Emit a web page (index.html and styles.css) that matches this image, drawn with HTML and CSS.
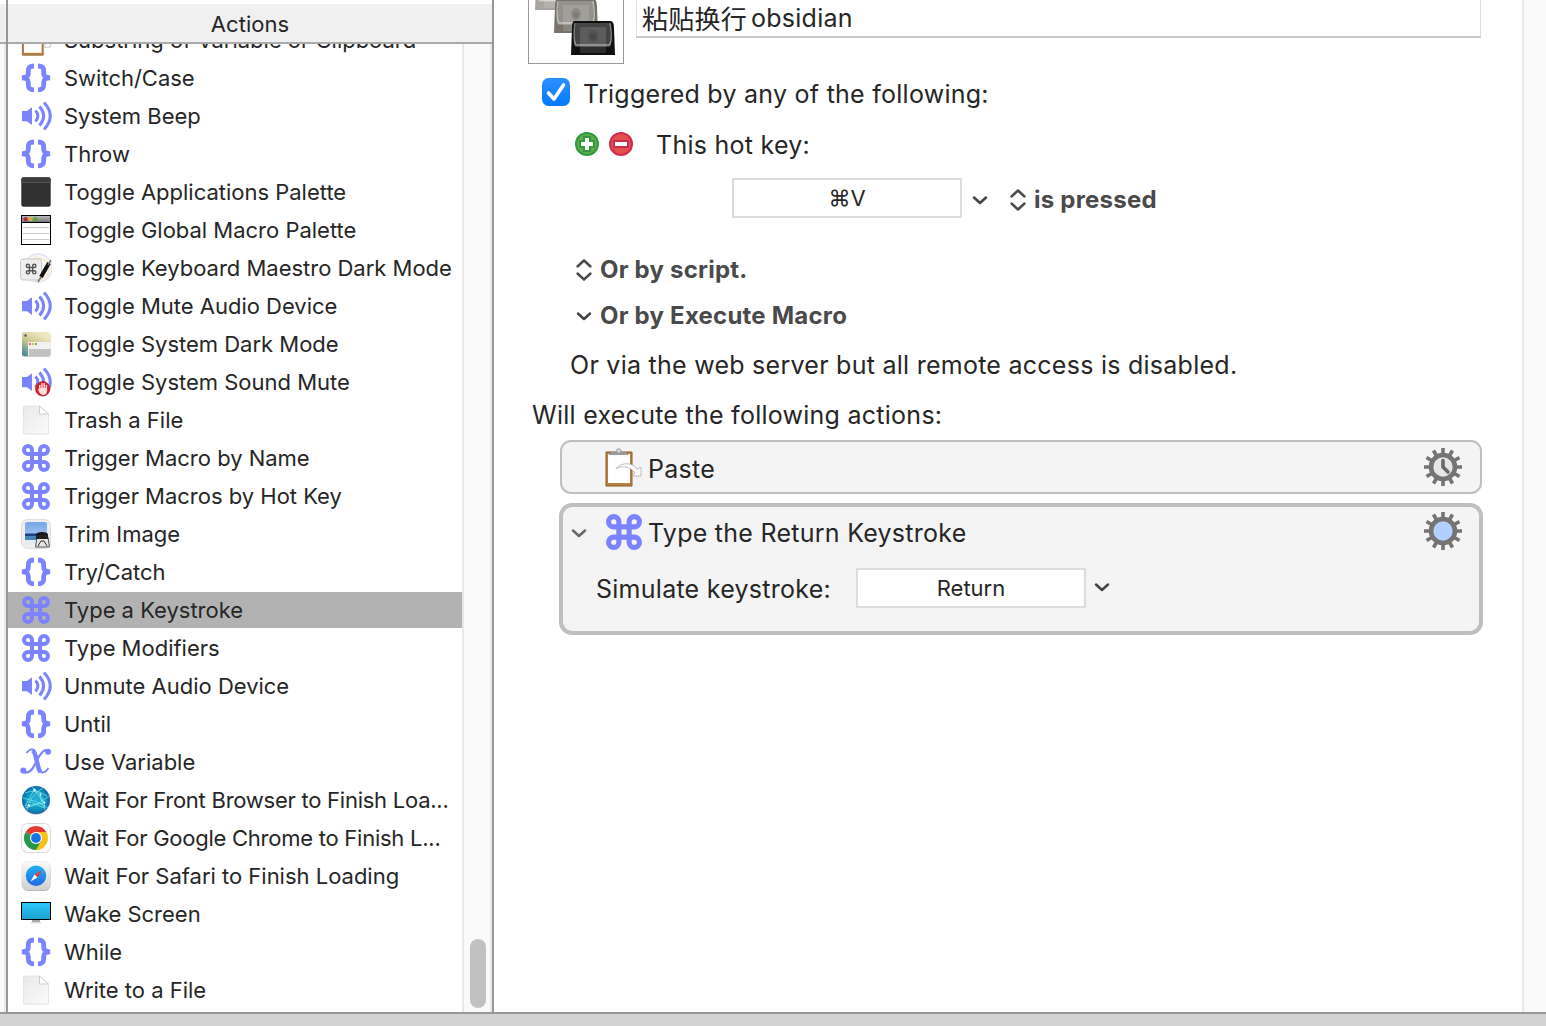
FILE: index.html
```html
<!DOCTYPE html>
<html lang="en">
<head>
<meta charset="utf-8">
<title>Macro Editor</title>
<link rel="stylesheet" href="styles.css">
</head>
<body>
<svg class="defs" width="0" height="0" aria-hidden="true">
  <defs>
    <linearGradient id="paper" x1="0" y1="0" x2="1" y2="1"><stop offset="0" stop-color="#e9e9e9"/><stop offset="1" stop-color="#fafafa"/></linearGradient>
    <linearGradient id="sky" x1="0" y1="0" x2="0" y2="1"><stop offset="0" stop-color="#76a7e8"/><stop offset="1" stop-color="#b9d4f4"/></linearGradient>
    <linearGradient id="screen" x1="0" y1="0" x2="0" y2="1"><stop offset="0" stop-color="#2dcbff"/><stop offset="1" stop-color="#1d9fcd"/></linearGradient>
    <linearGradient id="titlebar" x1="0" y1="0" x2="0" y2="1"><stop offset="0" stop-color="#bbb"/><stop offset="1" stop-color="#777"/></linearGradient>
    <linearGradient id="desk" x1="0.6" y1="0" x2="0" y2="1"><stop offset="0" stop-color="#f2e9c4"/><stop offset=".45" stop-color="#c9c893"/><stop offset="1" stop-color="#368098"/></linearGradient>
    <linearGradient id="tile" x1="0" y1="0" x2="0" y2="1"><stop offset="0" stop-color="#fafafa"/><stop offset="1" stop-color="#cfcfcf"/></linearGradient>
    <linearGradient id="compass" x1="0" y1="0" x2="0" y2="1"><stop offset="0" stop-color="#22b2f5"/><stop offset="1" stop-color="#2169e0"/></linearGradient>
    <radialGradient id="globe"><stop offset="0" stop-color="#25b4d8"/><stop offset=".7" stop-color="#0d94bd"/><stop offset="1" stop-color="#1267a8"/></radialGradient>
    <linearGradient id="check" x1="0" y1="0" x2="0" y2="1"><stop offset="0" stop-color="#2b91ff"/><stop offset="1" stop-color="#0577ff"/></linearGradient>
  </defs>
  <symbol id="i-brace" viewBox="0 0 32 32"><path d="M14 4C9.500 4 8.300 5.500 8.300 9v2.500c0 2.500-1.200 4-6.300 4.300 5.100.300 6.300 1.800 6.300 4.300v2.700c0 3.500 1.200 5 5.700 5M18 4c4.500 0 5.700 1.500 5.700 5v2.500c0 2.500 1.200 4 6.300 4.300-5.100.300-6.300 1.800-6.300 4.300v2.700c0 3.500-1.200 5-5.700 5" fill="none" stroke="#7b83ff" stroke-width="4.800"/></symbol>
  <symbol id="i-sound" viewBox="0 0 32 32"><path d="M2 11h5l5-3.800v17.800l-5-3.800H2z" fill="#7b83ff"/><path d="M15.500 10.500q4.800 5.500 0 11M19.500 6.500q8.300 9.500 0 19M24 2.500q12.500 13.500 0 27" fill="none" stroke="#7b83ff" stroke-width="3"/></symbol>
  <symbol id="i-cmd" viewBox="0 0 32 32"><path transform="translate(2 2)" d="M10 6a4 4 0 1 0-4 4H22a4 4 0 1 0-4-4V22a4 4 0 1 0 4-4H6a4 4 0 1 0 4 4Z" fill="none" stroke="#7b83ff" stroke-width="4"/></symbol>
  <symbol id="i-clip" viewBox="0 0 40 40"><path d="M3 5h26v34H3z" fill="#b78142" stroke="#8a5a29"/><path d="M5 7h22v29H5z" fill="#fff"/><path d="M5.500 8c1-3 5-3.500 8-3.500h4c4 0 7 1.500 8 3.500z" fill="#9b9b9b"/><circle cx="15.800" cy="4" r="2.200" fill="#ddd" stroke="#999"/><path d="M13 21.500C19 15 29 15 34 22l4-1.500v8.500h-9l3-3C27 19 19 18.500 13 21.500z" fill="#fff" stroke="#aaa" stroke-width=".8"/></symbol>
  <symbol id="i-dark" viewBox="0 0 32 32"><rect x="1.300" y="1.300" width="29.400" height="29.400" rx="2" fill="#303030"/><path d="M1.500 6h29V3q0-1.500-2-1.500h-25q-2 0-2 1.500z" fill="#3b3b3b"/><path d="M1.500 6.500h29" stroke="#555"/></symbol>
  <symbol id="i-palette" viewBox="0 0 32 32"><rect x="1.500" y="1.500" width="29" height="29" fill="#fff" stroke="#000"/><path d="M2 2h28v6H2z" fill="url(#titlebar)"/><path d="M2 8.500h28" stroke="#000"/><circle cx="5.500" cy="5.200" r="2.100" fill="#b52b37"/><circle cx="10.500" cy="5.200" r="2.100" fill="#e3a94b"/><circle cx="15.500" cy="5.200" r="2.100" fill="#58a52d"/><path d="M3 13.500h26M3 19.500h26M3 25.500h26" stroke="#c8c8c8"/></symbol>
  <symbol id="i-km" viewBox="0 0 32 32"><circle cx="18" cy="16" r="14" fill="#f9f5fb" stroke="#eae7f5" stroke-width="2"/><circle cx="18" cy="17" r="11" fill="none" stroke="#f7edcc" stroke-width="2"/><rect x=".5" y="7" width="21" height="21" rx="2.500" fill="#eee" stroke="#c9c9c9"/><path transform="translate(5.500 11.500) scale(.4)" d="M10 6a4 4 0 1 0-4 4H22a4 4 0 1 0-4-4V22a4 4 0 1 0 4-4H6a4 4 0 1 0 4 4Z" fill="none" stroke="#555" stroke-width="3.500"/><path d="m29 11-8 14" stroke="#111" stroke-width="4"/><path d="m31 8-3 5M18 30l3-5" stroke="#777" stroke-width="1.500"/></symbol>
  <symbol id="i-desk" viewBox="0 0 32 32"><rect x="2" y="5" width="28.500" height="24" rx="2.500" fill="#aaa" opacity=".6"/><rect x="2" y="4" width="28.500" height="24" rx="2.500" fill="url(#desk)"/><circle cx="5.500" cy="7.500" r="1.200" fill="#555"/><path d="M8 14h22.500v12q0 2-2 2H8z" fill="#f1f1f1"/><path d="M9 21h21.500v5q0 2-2 2H9z" fill="#c2c2c2"/><path d="M9 15h2v2H9z" fill="#ee6353"/><path d="M12 15h2v2h-2z" fill="#eeb441"/><path d="M15 15h2v2h-2z" fill="#55bd4b"/></symbol>
  <symbol id="i-mute" viewBox="0 0 32 32"><use href="#i-sound"/><circle cx="22.700" cy="22.800" r="7.200" fill="#df1f25" stroke="#b91820" stroke-width=".7"/><path d="M19 22v-3h1.500v3h.700v-5h1.500v5h.700v-5h1.500v5h.700v-3h1.500v6q-.5 4-4 4-3 0-5-5z" fill="#fff" opacity=".85"/></symbol>
  <symbol id="i-file" viewBox="0 0 32 32"><path d="M3.500 2.500h16l9 8v19.700h-25z" fill="#000" opacity=".18"/><path d="M3.500 2h16l9 8v19.300q0 .700-.7.700H4q-.7 0-.7-.7z" fill="url(#paper)" stroke="#ddd" stroke-width=".6"/><path d="M19.500 2v8h9z" fill="#fff" stroke="#bbb" stroke-width=".7"/></symbol>
  <symbol id="i-image" viewBox="0 0 32 32"><rect x="1.500" y="1.500" width="29" height="29" rx="6" fill="#eee" stroke="#dfdfdf"/><rect x="5" y="4" width="22" height="23" rx="2" fill="url(#sky)"/><path d="M5 15.500h22v3H5z" fill="#1d3f86"/><path d="M5 18.500h22v4H5z" fill="#3f86bd"/><path d="M5 22h20v5H7q-2 0-2-2z" fill="#e4eeee"/><path d="m17 19-1.500 10h14L28 19z" fill="#e4e4e4" stroke="#555"/><ellipse cx="22" cy="16.500" rx="6" ry="2.500" fill="#171717"/><path d="M16 17h12v4H16z" fill="#222"/><path d="m18 28 3-5h3l3 5" fill="none" stroke="#333"/></symbol>
  <symbol id="i-var" viewBox="0 0 32 32"><path d="M6.500 7C11 1 14.500 3 15.700 8l3.500 14c1.200 6 5.300 6 9.300 0" fill="none" stroke="#7b83ff" stroke-width="1.800"/><path d="M13 4.500c1 1 1.800 2.500 2.300 4.500l3.200 13q.6 2.500 2 4" fill="none" stroke="#7b83ff" stroke-width="4.500"/><path d="M29 4.500c-4.500-1.500-7 1-10 6l-5 9.500c-3 6-7 7.500-11.500 6" fill="none" stroke="#7b83ff" stroke-width="2.200"/><circle cx="28" cy="5.800" r="3" fill="#7b83ff"/><circle cx="3.300" cy="24.500" r="3" fill="#7b83ff"/></symbol>
  <symbol id="i-globe" viewBox="0 0 32 32"><circle cx="16" cy="16.800" r="14" fill="#999" opacity=".6"/><circle cx="16" cy="16" r="14" fill="url(#globe)"/><path d="M5 9q11-5 22 3M12 3q13 9 13 23M23 4Q9 12 7 26M3 14q13 2 25 10M5 24q12-2 24-12M14 6 5 22l19-3zM20 12l4 12-16-7" fill="none" stroke="#7cebf5" stroke-width=".7"/><path d="M14 5l1 2M24 18l1 1M8 21l2 1M20 10l1 1" stroke="#fff" stroke-width="2"/></symbol>
  <symbol id="i-chrome" viewBox="0 0 32 32"><rect x="1.500" y="1.500" width="29" height="29" rx="6" fill="#fff" stroke="#d8d8d8"/><path d="M16 16 5.600 10A12 12 0 0 1 26.400 10z" fill="#e33b2e"/><path d="M16 16 26.400 10A12 12 0 0 1 16 28z" fill="#fbc116"/><path d="M16 16 16 28A12 12 0 0 1 5.600 10z" fill="#279847"/><path d="M16 10h10.400L21 19z" fill="#fbc116"/><path d="m21 19-5 9-5-9z" fill="#279847"/><circle cx="16" cy="16" r="6" fill="#fff"/><circle cx="16" cy="16" r="4.900" fill="#1973e8"/></symbol>
  <symbol id="i-safari" viewBox="0 0 32 32"><rect x="2" y="2.500" width="28.500" height="28.500" rx="6" fill="#aaa"/><rect x="1.700" y="1.500" width="28.600" height="28.600" rx="6" fill="url(#tile)" stroke="#ddd" stroke-width=".5"/><circle cx="16" cy="15.800" r="10.200" fill="url(#compass)"/><path d="m22 10-7.500 4.500 3 3z" fill="#ef3c38"/><path d="m10.500 21.500 4-7 3 3z" fill="#fff"/></symbol>
  <symbol id="i-screen" viewBox="0 0 32 32"><path d="M12 22h8v2H12z" fill="#aaa"/><path d="M11 24h10v1.500H11z" fill="#ddd"/><rect x="1.500" y="4.500" width="29" height="17" fill="url(#screen)" stroke="#000"/></symbol>
  <symbol id="i-gear" viewBox="0 0 38 38"><g stroke="#747474" stroke-width="3.600"><path d="M19 0v38M0 19h38M9.500 2.500l19 33M2.500 9.500l33 19M2.500 28.500l33-19M9.500 35.500l19-33"/></g><circle cx="19" cy="19" r="14.300" fill="#747474"/><circle cx="19" cy="19" r="9.700" fill="currentColor"/></symbol>
  <symbol id="i-down" viewBox="0 0 18 18"><path d="m3 6.500 6 5.500 6-5.500" fill="none" stroke="currentColor" stroke-width="2.500" stroke-linecap="round" stroke-linejoin="round"/></symbol>
  <symbol id="i-updown" viewBox="0 0 18 24"><path d="m2.500 8.500 6.500-6 6.500 6m0 7L9 21.500l-6.500-6" fill="none" stroke="#4a4a4a" stroke-width="2.400" stroke-linecap="round" stroke-linejoin="round"/></symbol>
  <symbol id="i-palmrest" viewBox="0 0 46 36"><path d="M4 1h37q3 1 3 7l1 27H1L2 8q0-6 2-7z" fill="currentColor"/><path d="M6 3h34l1 21q0 3-3 3H7q-3 0-3-3z" fill="#fff" opacity=".22"/><path d="M5 3Q3 22 6 25h33q4-3 1-22" fill="none" stroke="#fff" stroke-width="1.500" opacity=".45"/><rect x="10" y="7" width="26" height="26" fill="#fff" opacity=".13"/><ellipse cx="23" cy="16" rx="5" ry="6" fill="#000" opacity=".13"/><circle cx="23" cy="17" r="2.800" fill="#000" opacity=".12"/></symbol>
</svg>

<div class="window">
  <div class="gutter"><div class="gutter-head"></div><div class="gutter-body"></div></div>
  <section class="actions">
    <header class="actions-head">Actions</header>
    <div class="actions-body">
      <ul class="list">
        <li class="first"><svg class="clip"><use href="#i-clip"/></svg><span>Substring of Variable or Clipboard</span></li>
        <li><svg><use href="#i-brace"/></svg><span>Switch/Case</span></li>
        <li><svg><use href="#i-sound"/></svg><span>System Beep</span></li>
        <li><svg><use href="#i-brace"/></svg><span>Throw</span></li>
        <li><svg><use href="#i-dark"/></svg><span>Toggle Applications Palette</span></li>
        <li><svg><use href="#i-palette"/></svg><span>Toggle Global Macro Palette</span></li>
        <li><svg><use href="#i-km"/></svg><span>Toggle Keyboard Maestro Dark Mode</span></li>
        <li><svg><use href="#i-sound"/></svg><span>Toggle Mute Audio Device</span></li>
        <li><svg><use href="#i-desk"/></svg><span>Toggle System Dark Mode</span></li>
        <li><svg><use href="#i-mute"/></svg><span>Toggle System Sound Mute</span></li>
        <li><svg><use href="#i-file"/></svg><span>Trash a File</span></li>
        <li><svg><use href="#i-cmd"/></svg><span>Trigger Macro by Name</span></li>
        <li><svg><use href="#i-cmd"/></svg><span>Trigger Macros by Hot Key</span></li>
        <li><svg><use href="#i-image"/></svg><span>Trim Image</span></li>
        <li><svg><use href="#i-brace"/></svg><span>Try/Catch</span></li>
        <li class="selected"><svg><use href="#i-cmd"/></svg><span>Type a Keystroke</span></li>
        <li><svg><use href="#i-cmd"/></svg><span>Type Modifiers</span></li>
        <li><svg><use href="#i-sound"/></svg><span>Unmute Audio Device</span></li>
        <li><svg><use href="#i-brace"/></svg><span>Until</span></li>
        <li><svg><use href="#i-var"/></svg><span>Use Variable</span></li>
        <li class="tight"><svg><use href="#i-globe"/></svg><span>Wait For Front Browser to Finish Loa...</span></li>
        <li class="tight"><svg><use href="#i-chrome"/></svg><span>Wait For Google Chrome to Finish L...</span></li>
        <li><svg><use href="#i-safari"/></svg><span>Wait For Safari to Finish Loading</span></li>
        <li><svg><use href="#i-screen"/></svg><span>Wake Screen</span></li>
        <li><svg><use href="#i-brace"/></svg><span>While</span></li>
        <li><svg><use href="#i-file"/></svg><span>Write to a File</span></li>
      </ul>
      <div class="scroll"><div class="thumb"></div></div>
    </div>
  </section>

  <main class="editor">
    <div class="title-row">
      <div class="macro-icon">
        <svg class="rest r1"><use href="#i-palmrest"/></svg>
        <svg class="rest r2"><use href="#i-palmrest"/></svg>
        <svg class="rest r3"><use href="#i-palmrest"/></svg>
      </div>
      <div class="macro-name"><span class="cjk">粘贴换行</span><span>obsidian</span></div>
    </div>
    <div class="row trigger">
      <svg class="checkbox" viewBox="0 0 28 28"><rect width="28" height="28" rx="6.500" fill="url(#check)"/><path d="m6.500 15 5.500 6 9.500-14" fill="none" stroke="#fff" stroke-width="3.600" stroke-linecap="round" stroke-linejoin="round"/></svg>
      <span class="t-trigger">Triggered by any of the following:</span>
    </div>
    <div class="row hotkey">
      <svg class="round" viewBox="0 0 24 24"><circle cx="12" cy="12" r="11" fill="#61ad45" stroke="#2d9a3f" stroke-width="2"/><path d="M9 5h6v4h4v6h-4v4H9v-4H5V9h4z" fill="#fff" stroke="#2d9a3f" stroke-width="2"/></svg>
      <svg class="round" viewBox="0 0 24 24"><circle cx="12" cy="12" r="11" fill="#e34d4d" stroke="#cf2c50" stroke-width="2"/><path d="M5 9h14v6H5z" fill="#fff" stroke="#cf2c50" stroke-width="2"/></svg>
      <span class="t-hot">This hot key:</span>
    </div>
    <div class="row pressed">
      <div class="field">⌘V</div>
      <svg class="down"><use href="#i-down"/></svg>
      <svg class="updown"><use href="#i-updown"/></svg>
      <b>is pressed</b>
    </div>
    <div class="row script"><svg class="updown"><use href="#i-updown"/></svg><b>Or by script.</b></div>
    <div class="row execute"><svg class="down"><use href="#i-down"/></svg><b>Or by Execute Macro</b></div>
    <div class="row server"><span class="t-server">Or via the web server but all remote access is disabled.</span></div>
    <div class="row will"><span class="t-will">Will execute the following actions:</span></div>
    <div class="card paste">
      <svg class="big"><use href="#i-clip"/></svg>
      <span class="t-paste">Paste</span>
      <svg class="gear idle" viewBox="0 0 38 38"><use href="#i-gear"/><path d="M19 12.500V19l5 5" fill="none" stroke="#666" stroke-width="3.500" stroke-linecap="round"/></svg>
    </div>
    <div class="card keystroke">
      <div class="card-head">
        <svg class="down"><use href="#i-down"/></svg>
        <svg class="command" viewBox="2 2 28 28"><use href="#i-cmd" width="32" height="32"/></svg>
        <span class="t-type">Type the Return Keystroke</span>
        <svg class="gear active"><use href="#i-gear"/></svg>
      </div>
      <div class="card-row">
        <span class="t-sim">Simulate keystroke:</span>
        <div class="field">Return</div>
        <svg class="down"><use href="#i-down"/></svg>
      </div>
    </div>
  </main>
  <div class="outer-scroll"></div>
</div>
<footer class="bottom"></footer>
</body>
</html>
```
FILE: styles.css
```css
* { box-sizing: border-box; }
body { margin: 0; width: 1546px; height: 1026px; overflow: hidden; display: flex; flex-direction: column; background: #fff; color: #262626; font-family: Inter, "Noto Sans CJK SC", sans-serif; font-size: 25px; letter-spacing: .26px; }
svg { display: block; flex: none; }
.defs { position: absolute; }
.window { height: 1012px; display: flex; }
.bottom { height: 14px; background: #d3d3d3; border-top: 2px solid #979797; }
.gutter { width: 6px; padding-top: 4px; display: flex; flex-direction: column; }
.gutter-head { height: 40px; background: #f0f0f0; border-bottom: 2px solid #ababab; }
.gutter-body { flex: 1; background: #f9f9f9; border-right: 2px solid #e8e8e8; }
.actions { width: 488px; border: solid #979797; border-width: 0 2px; display: flex; flex-direction: column; }
.actions-head { height: 40px; margin-top: 4px; background: #f0f0f0; border-bottom: 2px solid #ababab; text-align: center; font-size: 22px; line-height: 40px; letter-spacing: .05px; }
.actions-body { height: 968px; display: flex; overflow: hidden; }
.list { width: 454px; margin: -23px 0 0; padding: 0; list-style: none; overflow: hidden; }
.list li { height: 36px; margin: 1px 0 2px; padding-left: 12px; display: flex; align-items: center; gap: 12px; font-size: 22px; letter-spacing: -.01px; white-space: nowrap; }
.list li + li { margin-top: 2px; }
.list .tight { letter-spacing: -.25px; }
.list svg { width: 32px; height: 32px; }
.list .selected { background: #b2b2b2; }
.scroll { width: 30px; padding: 895px 4px 0 6px; background: #fafafa; border: solid #e8e8e8; border-width: 0 2px; }
.thumb { width: 16px; height: 69px; border-radius: 8px; background: #c1c1c1; }
.editor { width: 1028px; overflow: hidden; }
.outer-scroll { flex: 1; background: #fafafa; border-left: 2px solid #e8e8e8; }
.title-row { height: 64px; padding-left: 34px; display: flex; gap: 12px; align-items: flex-start; }
.macro-icon { width: 96px; height: 64px; border: 1px solid #999; border-top: 0; position: relative; overflow: hidden; }
.rest { position: absolute; width: 46px; height: 36px; }
.r1 { left: 5px; top: -25px; color: #a7a59e; }
.r2 { left: 24px; top: -2px; color: #77736b; }
.r3 { left: 41px; top: 20px; color: #101010; }
.macro-name { width: 845px; height: 38px; padding-left: 5px; border: 1px solid #ddd; border-top: 0; border-bottom: 2px solid #c9c9c9; display: flex; align-items: center; line-height: 36px; }
.cjk { font-family: "Noto Sans CJK SC", sans-serif; font-size: 26px; width: 109px; }
.row { display: flex; align-items: center; white-space: nowrap; }
.row b { color: #4a4a4a; font-size: 24px; letter-spacing: .22px; }
.down { width: 18px; height: 18px; color: #444; }
.updown { width: 18px; height: 24px; }
.field { width: 230px; height: 40px; border: 2px solid #dcdcdc; background: #fff; display: flex; align-items: center; justify-content: center; font-size: 22px; letter-spacing: 0; }
.trigger { height: 60px; padding-left: 48px; gap: 13px; }
.checkbox { width: 28px; height: 28px; margin-top: -4px; }
.hotkey { height: 40px; padding-left: 81px; gap: 10px; }
.round { width: 24px; height: 24px; }
.t-hot { margin: 2px 0 0 13px; }
.pressed { height: 40px; margin-top: 14px; padding-left: 238px; }
.pressed .down { margin: 4px 0 0 9px; }
.pressed .updown { margin: 4px 7px 0 20px; }
.pressed b { margin-top: 2px; }
.script { height: 44px; margin-top: 30px; padding-left: 81px; gap: 7px; }
.execute { height: 48px; padding-left: 81px; gap: 7px; }
.script b, .execute b { margin-top: -2px; }
.server { height: 50px; padding-left: 76px; }
.will { height: 50px; padding-left: 38px; }
.card { background: #f4f4f4; border: 2px solid #bfbfbf; white-space: nowrap; }
.paste { width: 922px; height: 54px; margin-left: 66px; border-radius: 11px; padding: 0 18px 0 41px; display: flex; align-items: center; }
.big { width: 40px; height: 40px; margin-right: 5px; }
.t-paste { margin-top: 3px; }
.gear { width: 38px; height: 38px; margin-left: auto; }
.idle { color: #e5e5e5; }
.active { color: #b1d0ff; margin-top: -2px; }
.keystroke { width: 924px; height: 132px; margin: 9px 0 0 65px; border-width: 4px; border-radius: 13px; padding: 0 17px 0 7px; }
.card-head { height: 50px; display: flex; align-items: center; }
.card-head .down { margin-top: 2px; color: #666; }
.command { width: 36px; height: 36px; margin: 0 6px 0 18px; }
.t-type { margin-top: 2px; }
.card-row { display: flex; align-items: center; height: 40px; margin: 11px 0 0 26px; }
.t-sim { width: 260px; margin-top: 2px; }
.card-row .down { margin: -3px 0 0 7px; }
```
